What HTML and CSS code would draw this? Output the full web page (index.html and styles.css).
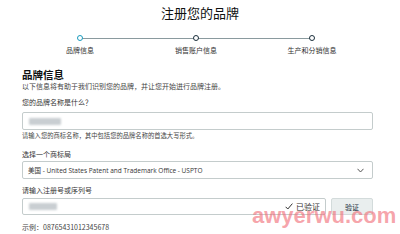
FILE: index.html
```html
<!DOCTYPE html>
<html lang="zh">
<head>
<meta charset="utf-8">
<link rel="stylesheet" href="styles.css">
</head>
<body>
<div class="page">
  <h1 class="title">注册您的品牌</h1>
  <div class="stepper">
    <div class="step active"><span class="dot"></span><span class="step-label">品牌信息</span></div>
    <div class="step"><span class="dot"></span><span class="step-label">销售账户信息</span></div>
    <div class="step"><span class="dot"></span><span class="step-label">生产和分销信息</span></div>
  </div>
  <div class="form">
    <h2 class="heading">品牌信息</h2>
    <p class="desc">以下信息将有助于我们识别您的品牌，并让您开始进行品牌注册。</p>
    <label class="label l1">您的品牌名称是什么？</label>
    <div class="field f1"><span class="blur b1"></span></div>
    <p class="help">请输入您的商标名称，其中包括您的品牌名称的首选大写形式。</p>
    <label class="label l2">选择一个商标局</label>
    <div class="field select">
      <span class="select-text">美国 - United States Patent and Trademark Office - USPTO</span>
      <svg class="chev" width="7" height="5" viewBox="0 0 7 5"><polyline points="0.5,0.8 3.5,4 6.5,0.8" fill="none" stroke="#555" stroke-width="1"/></svg>
    </div>
    <label class="label l3">请输入注册号或序列号</label>
    <div class="row">
      <div class="field f3">
        <span class="blur b3"></span>
        <span class="verified"><svg width="8" height="7" viewBox="0 0 8 7"><polyline points="0.6,3.8 2.8,6 7.4,0.6" fill="none" stroke="#333" stroke-width="1"/></svg>已验证</span>
      </div>
      <button class="btn">验证</button>
    </div>
    <p class="example">示例：08765431012345678</p>
  </div>
  <div class="watermark">awyerwu.com</div>
</div>
</body>
</html>
```
FILE: styles.css
```css
* { box-sizing: border-box; }
html, body { margin: 0; padding: 0; background: #fff; }
body { font-family: "Noto Sans CJK SC", "Noto Sans", sans-serif; color: #0f1111; }
.page { position: relative; width: 400px; height: 234px; overflow: hidden; }
.title { margin: 0; padding-top: 3px; font-size: 13px; line-height: 20px; font-weight: 400; text-align: center; color: #0f1111; }
.stepper { position: relative; display: flex; margin: 12px 0 0 22px; width: 348px; }
.stepper::before { content: ""; position: absolute; left: 58px; right: 58px; top: 2.5px; height: 1px; background: #8a9a9e; }
.step { position: relative; width: 116px; display: flex; flex-direction: column; align-items: center; }
.dot { width: 6px; height: 6px; border-radius: 50%; border: 1.5px solid #1b2f3c; background: #fff; position: relative; z-index: 1; }
.step.active .dot { border-color: #1a9bbd; }
.step-label { margin-top: 4px; font-size: 7px; line-height: 10px; color: #333; white-space: nowrap; }
.form { padding: 0 27px 0 22px; }
.heading { margin: 14px 0 0; font-size: 10.5px; line-height: 12px; font-weight: 700; }
.desc { margin: 0; font-size: 7px; line-height: 10px; color: #444; }
.label { display: block; font-size: 7px; line-height: 10px; color: #333; }
.l1 { margin-top: 6px; }
.l2 { margin-top: 8px; }
.l3 { margin-top: 6px; }
.field { position: relative; display: flex; align-items: center; height: 18px; border: 1px solid #c4cccc; border-bottom-width: 1.5px; border-right-width: 1.5px; border-radius: 2px; background: #fff; padding: 0 6px; }
.f1 { margin-top: 5px; }
.help { margin: 1px 0 0; font-size: 6.3px; line-height: 10px; color: #444; }
.select { margin-top: 2px; justify-content: space-between; padding: 0 8px 0 5px; }
.select-text { font-family: "Open Sans", "Noto Sans CJK SC", sans-serif; font-size: 6.5px; color: #333; white-space: nowrap; }
.chev { display: block; }
.row { display: flex; gap: 5px; margin-top: 3px; }
.f3 { flex: 1; height: 17px; justify-content: space-between; padding: 0 5px 0 6px; }
.blur { display: block; height: 7px; background: #c9ced2; filter: blur(1px); border-radius: 1px; }
.b1 { width: 32px; }
.b3 { width: 28px; }
.verified { display: flex; align-items: center; gap: 3px; font-size: 8px; color: #333; }
.btn { width: 42px; height: 17px; border: 1px solid #d3dbdb; border-radius: 2px; background: #e9eeee; font-family: "Noto Sans CJK SC", sans-serif; font-size: 7px; color: #1b2f3c; padding: 0; }
.example { margin: 7px 0 0; font-size: 7px; line-height: 10px; color: #444; }
.watermark { position: absolute; left: 252px; top: 203px; font-family: "Liberation Sans", sans-serif; font-weight: 700; font-size: 22px; line-height: 26px; color: rgba(240, 105, 115, 0.6); letter-spacing: 0; }
```
